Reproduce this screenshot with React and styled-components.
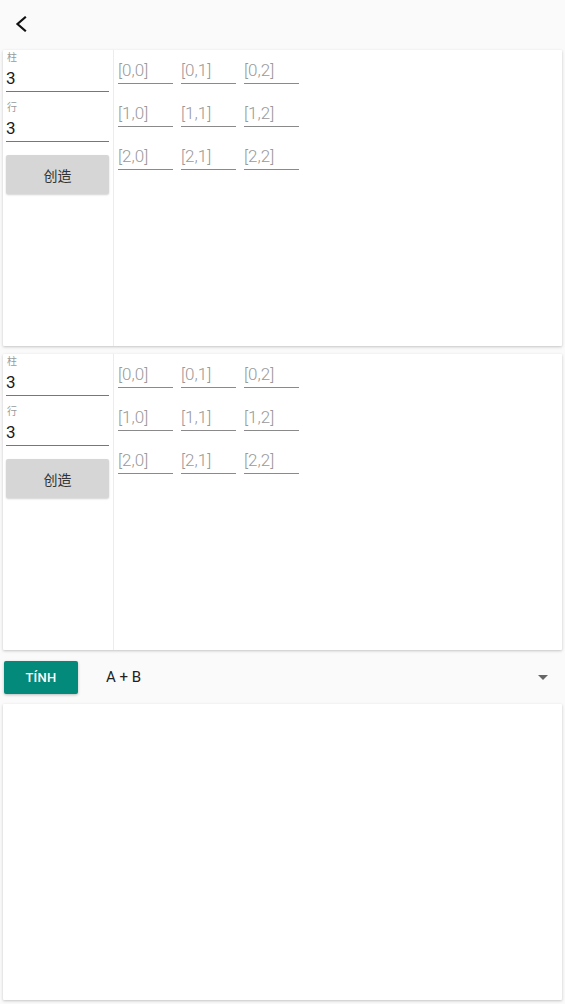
import * as React from "react";
import styled, { createGlobalStyle } from "styled-components";

const GlobalStyle = createGlobalStyle`
  html, body {
    margin: 0;
    padding: 0;
    background: #fafafa;
    font-family: Roboto, "Noto Sans CJK SC", sans-serif;
  }
  * {
    box-sizing: border-box;
  }
`;

const Page = styled.div`
  width: 565px;
  min-height: 1004px;
  display: flex;
  flex-direction: column;
  background: #fafafa;
`;

const Header = styled.header`
  height: 48px;
  display: flex;
  align-items: center;
  padding-left: 12px;
  margin-bottom: 2px;
`;

const BackButton = styled.button`
  width: 18px;
  height: 24px;
  padding: 0;
  border: none;
  background: none;
  display: flex;
  align-items: center;
  justify-content: center;
`;

const Card = styled.section`
  margin: 0 3px;
  height: ${(p) => p.$height}px;
  background: #fff;
  box-shadow: 0 1px 3px rgba(0, 0, 0, 0.22);
  border-radius: 1px;
  display: flex;
`;

const Stack = styled.div`
  display: flex;
  flex-direction: column;
  gap: 8px;
`;

const SideColumn = styled.div`
  width: 111px;
  border-right: 1px solid #ececec;
  padding: 0 4px 0 3px;
  display: flex;
  flex-direction: column;
`;

const Field = styled.label`
  display: flex;
  flex-direction: column;
  margin-top: ${(p) => p.$top || 0}px;
`;

const FieldLabel = styled.span`
  font-size: 10px;
  line-height: 16px;
  color: #9a9a9a;
  padding-left: 1px;
`;

const FieldValue = styled.span`
  font-size: 17px;
  line-height: 25px;
  color: #1a1a1a;
  border-bottom: 1px solid #777;
`;

const CreateButton = styled.button`
  margin-top: 13px;
  height: 39px;
  border: none;
  border-radius: 2px;
  background: #d6d6d6;
  box-shadow: 0 1px 2px rgba(0, 0, 0, 0.18);
  color: #333;
  font-family: Roboto, "Noto Sans CJK SC", sans-serif;
  font-size: 14px;
`;

const MatrixGrid = styled.div`
  padding: 10px 0 0 4px;
  display: grid;
  grid-template-columns: repeat(3, 55px);
  grid-auto-rows: 24px;
  column-gap: 8px;
  row-gap: 19px;
  align-content: start;
`;

const Cell = styled.div`
  font-size: 17px;
  font-weight: 300;
  line-height: 21px;
  color: #9a9a9a;
  border-bottom: 1px solid #8a8a8a;
  white-space: nowrap;
`;

const Toolbar = styled.div`
  height: 54px;
  display: flex;
  align-items: center;
  padding: 0 4px;
`;

const PrimaryButton = styled.button`
  width: 74px;
  height: 33px;
  border: none;
  border-radius: 2px;
  background: #048a7b;
  box-shadow: 0 1px 3px rgba(0, 0, 0, 0.25);
  color: #fff;
  font-family: Roboto, sans-serif;
  font-size: 13px;
  font-weight: 500;
  letter-spacing: 0.3px;
`;

const Select = styled.div`
  flex: 1;
  margin-left: 28px;
  margin-right: 13px;
  display: flex;
  align-items: center;
  justify-content: space-between;
  font-size: 15px;
  color: #222;
`;

const Caret = styled.span`
  width: 0;
  height: 0;
  border-left: 5px solid transparent;
  border-right: 5px solid transparent;
  border-top: 5px solid #666;
`;

const cells = [
  ["[0,0]", "[0,1]", "[0,2]"],
  ["[1,0]", "[1,1]", "[1,2]"],
  ["[2,0]", "[2,1]", "[2,2]"],
];

function MatrixCard() {
  return (
    <Card $height={296}>
      <SideColumn>
        <Field>
          <FieldLabel>柱</FieldLabel>
          <FieldValue>3</FieldValue>
        </Field>
        <Field $top={8}>
          <FieldLabel>行</FieldLabel>
          <FieldValue>3</FieldValue>
        </Field>
        <CreateButton>创造</CreateButton>
      </SideColumn>
      <MatrixGrid>
        {cells.flat().map((c) => (
          <Cell key={c}>{c}</Cell>
        ))}
      </MatrixGrid>
    </Card>
  );
}

export default function App() {
  return (
    <Page>
      <GlobalStyle />
      <Header>
        <BackButton aria-label="back">
          <svg width="12" height="16" viewBox="0 0 12 16">
            <polyline
              points="10,1.5 2.5,8 10,14.5"
              fill="none"
              stroke="#111"
              strokeWidth="2.2"
              strokeLinecap="square"
            />
          </svg>
        </BackButton>
      </Header>
      <Stack>
        <MatrixCard />
        <MatrixCard />
      </Stack>
      <Toolbar>
        <PrimaryButton>TÍNH</PrimaryButton>
        <Select>
          <span>A + B</span>
          <Caret />
        </Select>
      </Toolbar>
      <Card $height={296} />
    </Page>
  );
}
